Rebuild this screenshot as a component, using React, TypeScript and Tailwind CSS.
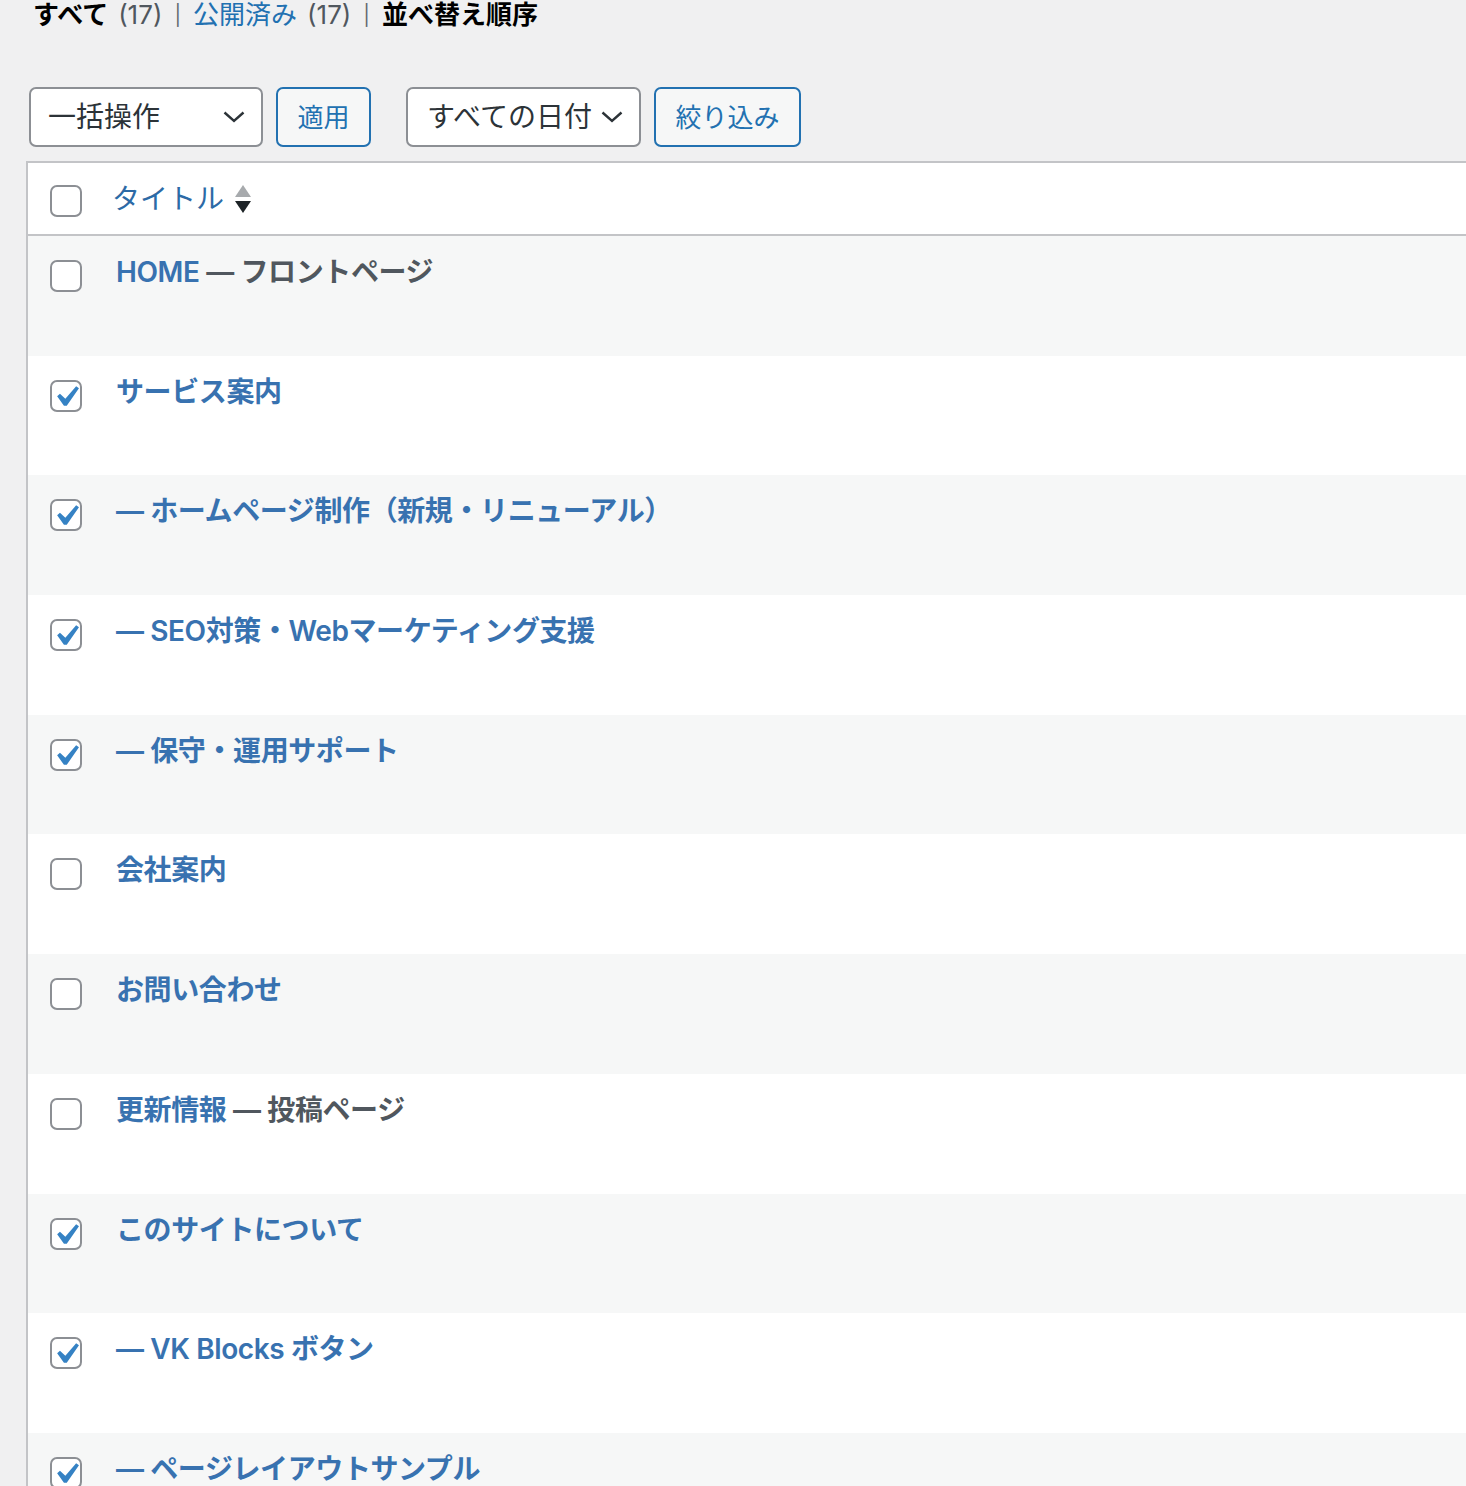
import React from "react";

const rows: { blue: string; gray?: string; checked: boolean }[] = [
  { blue: "HOME", gray: " — フロントページ", checked: false },
  { blue: "サービス案内", checked: true },
  { blue: "— ホームページ制作（新規・リニューアル）", checked: true },
  { blue: "— SEO対策・Webマーケティング支援", checked: true },
  { blue: "— 保守・運用サポート", checked: true },
  { blue: "会社案内", checked: false },
  { blue: "お問い合わせ", checked: false },
  { blue: "更新情報", gray: " — 投稿ページ", checked: false },
  { blue: "このサイトについて", checked: true },
  { blue: "— VK Blocks ボタン", checked: true },
  { blue: "— ページレイアウトサンプル", checked: true },
];

function Checkbox({ checked }: { checked: boolean }) {
  return (
    <div className="relative w-[32px] h-[32px] shrink-0 rounded-[7px] border-2 border-[#8c8f94] bg-white">
      {checked && (
        <svg
          viewBox="0 0 20 20"
          className="absolute left-[-7px] top-[-6px] w-[42px] h-[42px]"
        >
          <path
            d="M14.83 4.89l1.34.94-5.81 8.38H9.02L5.78 9.67l1.34-1.25 2.57 2.4z"
            fill="#3582c4"
          />
        </svg>
      )}
    </div>
  );
}

function Chevron() {
  return (
    <svg viewBox="0 0 22 12" className="w-[22px] h-[12px]">
      <polyline
        points="1.5,1.5 11,10 20.5,1.5"
        fill="none"
        stroke="#2c3338"
        strokeWidth="2.4"
      />
    </svg>
  );
}

export default function App() {
  return (
    <div className="min-h-screen bg-[#f0f0f1] overflow-hidden">
      <div className="font-['Inter','Noto_Sans_CJK_JP',sans-serif]">
        {/* status links */}
        <div className="pl-[33px] h-[30px] leading-[30px] text-[26px] text-[#50575e] flex items-center whitespace-nowrap">
          <span className="font-bold text-black">すべて</span>
          <span className="ml-[10px]">(17)</span>
          <span className="mx-[12px] text-[#646970] text-[20px]">|</span>
          <span className="text-[#2271b1]">公開済み</span>
          <span className="ml-[10px]">(17)</span>
          <span className="mx-[12px] text-[#646970] text-[20px]">|</span>
          <span className="font-bold text-black">並べ替え順序</span>
        </div>

        {/* toolbar */}
        <div className="mt-[57px] pl-[29px] flex items-center h-[60px]">
          <div className="w-[234px] h-[60px] rounded-[7px] border-2 border-[#8c8f94] bg-white flex items-center justify-between pl-[17px] pr-[16px] text-[28px] text-[#2c3338]">
            <span>一括操作</span>
            <Chevron />
          </div>
          <div className="ml-[13px] w-[95px] h-[60px] rounded-[7px] border-2 border-[#2271b1] bg-[#f6f7f7] flex items-center justify-center text-[26px] text-[#2271b1]">
            適用
          </div>
          <div className="ml-[35px] w-[235px] h-[60px] rounded-[7px] border-2 border-[#8c8f94] bg-white flex items-center justify-between pl-[19px] pr-[16px] text-[28px] text-[#2c3338]">
            <span>すべての日付</span>
            <Chevron />
          </div>
          <div className="ml-[13px] w-[147px] h-[60px] rounded-[7px] border-2 border-[#2271b1] bg-[#f6f7f7] flex items-center justify-center text-[26px] text-[#2271b1]">
            絞り込み
          </div>
        </div>

        {/* table */}
        <div className="mt-[14px] ml-[26px] border-t-2 border-l-2 border-[#c3c4c7] bg-white">
          <div className="h-[73px] border-b-2 border-[#c3c4c7] flex items-start pl-[22px] pt-[22px]">
            <Checkbox checked={false} />
            <div className="ml-[30px] mt-[-6px] flex items-center text-[28px] leading-[40px] text-[#2c6aa6]">
              <span>タイトル</span>
              <svg viewBox="0 0 16 30" className="ml-[11px] w-[16px] h-[30px]">
                <polygon points="8,1 16,13 0,13" fill="#a7aaad" />
                <polygon points="0,17 16,17 8,29" fill="#1d2327" />
              </svg>
            </div>
          </div>
          {rows.map((r, i) => (
            <div
              key={i}
              className={`h-[119.7px] flex items-start pl-[22px] pt-[24px] ${
                i % 2 === 0 ? "bg-[#f6f7f7]" : "bg-white"
              }`}
            >
              <Checkbox checked={r.checked} />
              <div className="ml-[34px] mt-[-8px] text-[28px] leading-[40px] font-semibold tracking-[-0.4px] whitespace-nowrap">
                <span className="text-[#3872b0]">{r.blue}</span>
                {r.gray && <span className="text-[#50575e]">{r.gray}</span>}
              </div>
            </div>
          ))}
        </div>
      </div>
    </div>
  );
}
